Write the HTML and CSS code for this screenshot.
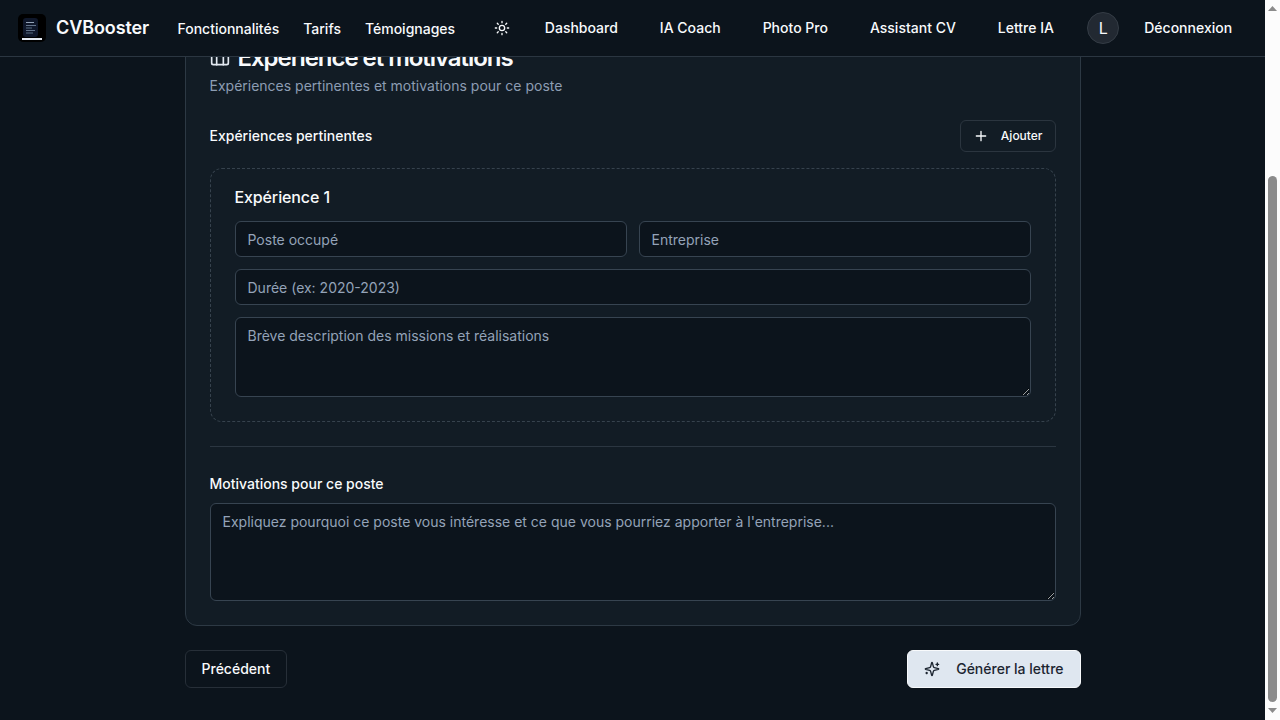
FILE: index.html
```html
<!DOCTYPE html>
<html lang="fr">
<head>
<meta charset="utf-8">
<title>CVBooster</title>
<link rel="stylesheet" href="styles.css">
</head>
<body>
<div class="page">
  <header class="header">
    <svg class="logo" width="28" height="28" viewBox="0 0 28 28"><rect width="28" height="28" rx="5" fill="#000"/><rect x="5" y="4" width="15" height="19" rx="3" fill="#0f172a"/><path d="M8 8.500h8" stroke="#94a3b8"/><path d="M8 11.500h10M8 16.500h9" stroke="#64748b"/><path d="M8 14h6M8 19h7" stroke="#334155" stroke-width="2"/><rect x="4" y="24" width="20" height="2" fill="#e2e8f0"/></svg>
    <span class="brand">CVBooster</span>
    <nav class="links"><a>Fonctionnalités</a><a>Tarifs</a><a>Témoignages</a></nav>
    <svg class="icon sun" width="16" height="16" viewBox="0 0 24 24"><circle cx="12" cy="12" r="4"/><path d="M12 2v2M12 20v2M4.930 4.930l1.410 1.410M17.660 17.660l1.410 1.410M2 12h2M20 12h2M6.340 17.660l-1.410 1.410M19.070 4.930l-1.410 1.410"/></svg>
    <nav class="app-links"><a>Dashboard</a><a>IA Coach</a><a>Photo Pro</a><a>Assistant CV</a><a>Lettre IA</a></nav>
    <span class="avatar">L</span>
    <a class="logout">Déconnexion</a>
  </header>
  <main class="main">
    <section class="card">
      <h2 class="title"><svg class="icon" width="20" height="20" viewBox="0 0 24 24"><path d="M16 20V4a2 2 0 0 0-2-2h-4a2 2 0 0 0-2 2v16"/><rect x="2" y="6" width="20" height="14" rx="2"/></svg>Expérience et motivations</h2>
      <p class="subtitle">Expériences pertinentes et motivations pour ce poste</p>
      <div class="row">
        <span class="label">Expériences pertinentes</span>
        <button class="btn small"><svg class="icon" width="16" height="16" viewBox="0 0 24 24"><path d="M5 12h14M12 5v14"/></svg>Ajouter</button>
      </div>
      <div class="experience">
        <h4 class="exp-title">Expérience 1</h4>
        <div class="fields">
          <input class="field" placeholder="Poste occupé">
          <input class="field" placeholder="Entreprise">
          <input class="field wide" placeholder="Durée (ex: 2020-2023)">
          <textarea class="field wide area" placeholder="Brève description des missions et réalisations"></textarea>
        </div>
      </div>
      <hr class="separator">
      <label class="label motivation">Motivations pour ce poste</label>
      <textarea class="field area tall" placeholder="Expliquez pourquoi ce poste vous intéresse et ce que vous pourriez apporter à l'entreprise..."></textarea>
    </section>
    <div class="actions">
      <button class="btn">Précédent</button>
      <button class="btn primary"><svg class="icon" width="16" height="16" viewBox="0 0 24 24"><path d="M9.937 15.5A2 2 0 0 0 8.5 14.063l-6.135-1.582a.5.5 0 0 1 0-.962L8.5 9.936A2 2 0 0 0 9.937 8.5l1.582-6.135a.5.5 0 0 1 .963 0L14.063 8.5A2 2 0 0 0 15.5 9.937l6.135 1.581a.5.5 0 0 1 0 .964L15.5 14.063a2 2 0 0 0-1.437 1.437l-1.582 6.135a.5.5 0 0 1-.963 0z"/><path d="M20 3v4M22 5h-4M4 17v2M5 18H3"/></svg>Générer la lettre</button>
    </div>
  </main>
</div>
<div class="scrollbar">
  <svg width="9" height="5" viewBox="0 0 9 5"><path d="M4.500 0L9 5H0z" fill="#8b8b8b"/></svg>
  <div class="thumb"></div>
  <svg width="9" height="5" viewBox="0 0 9 5"><path d="M0 0h9L4.500 5z" fill="#8b8b8b"/></svg>
</div>
</body>
</html>
```
FILE: styles.css
```css
* { box-sizing: border-box; margin: 0; }
body {
  display: flex;
  height: 720px;
  overflow: hidden;
  background: #0c141c;
  color: #f8fafc;
  font: 14px/20px Inter, sans-serif;
}
.page { width: 1265px; height: 720px; overflow: hidden; }
.icon {
  fill: none;
  stroke: currentColor;
  stroke-width: 2;
  stroke-linecap: round;
  stroke-linejoin: round;
  flex: none;
}
.header {
  height: 57px;
  display: flex;
  align-items: center;
  padding-left: 18px;
  border-bottom: 1px solid #2b3641;
  font-weight: 500;
  white-space: nowrap;
}
.brand { margin-left: 10px; width: 93px; font-size: 18px; line-height: 28px; font-weight: 600; letter-spacing: -0.1px; }
.links { display: flex; gap: 24px; margin-left: 28.5px; padding-top: 2px; }
.sun { margin-left: 39px; }
.app-links { display: flex; gap: 42px; margin-left: 34.7px; }
.avatar {
  width: 32px;
  height: 32px;
  margin-left: 33.3px;
  border: 1px solid #343c45;
  border-radius: 50%;
  background: #222932;
  text-align: center;
  font-size: 16px;
  line-height: 31px;
  font-weight: 400;
}
.logout { margin-left: 25px; }
.main { width: 896px; margin: 0 auto; height: 663px; overflow: hidden; }
.card {
  height: 594px;
  margin-top: -25px;
  padding: 9px 24px 24px;
  background: #121c25;
  border: 1px solid #2d3944;
  border-radius: 12px;
}
.title {
  display: flex;
  align-items: center;
  gap: 8px;
  height: 32px;
  font-size: 24px;
  line-height: 32px;
  font-weight: 600;
  letter-spacing: -1.04px;
}
.title .icon { color: #e2e8f0; }
.subtitle { margin-top: 2px; color: #8d9db3; }
.row { display: flex; align-items: center; justify-content: space-between; margin-top: 24px; }
.label { font-weight: 500; }
.btn {
  display: flex;
  align-items: center;
  gap: 16px;
  height: 38px;
  padding: 0 16px;
  border: 1px solid #272f38;
  border-radius: 6px;
  background: transparent;
  color: #f8fafc;
  font: 500 14px/20px Inter, sans-serif;
}
.small { height: 32px; padding: 0 12px; gap: 12px; border-color: #2b353f; font-size: 12px; }
.experience {
  height: 254px;
  margin-top: 16px;
  padding: 16px 24px;
  border: 1px dashed #36424d;
  border-radius: 12px;
}
.exp-title { font-size: 16px; line-height: 24px; font-weight: 500; letter-spacing: -0.12px; }
.fields { display: grid; grid-template-columns: 1fr 1fr; gap: 12px; margin-top: 12px; }
.field {
  display: block;
  width: 100%;
  height: 36px;
  padding: 4px 12px;
  background: #0c141c;
  border: 1px solid #374451;
  border-radius: 6px;
  color: #f8fafc;
  font: 14px/20px Inter, sans-serif;
}
.field::placeholder { color: #94a3b8; opacity: 1; }
.wide { grid-column: 1 / -1; }
.area { height: 80px; padding: 8px 12px; }
.tall { height: 98px; margin-top: 9px; }
.separator { height: 1px; margin: 24px 0 27px; border: 0; background: #2b3641; }
.motivation { display: block; }
.actions { display: flex; justify-content: space-between; margin-top: 24px; }
.primary { background: #dfe7f0; border-color: #f8fafc; color: #1c2530; }
.scrollbar {
  width: 15px;
  height: 720px;
  padding: 6px 0 7px;
  display: flex;
  flex-direction: column;
  align-items: center;
  background: #fcfcfc;
}
.thumb { width: 9px; height: 526px; margin: 165px 0 6px; border-radius: 5px; background: #8b8b8b; }
```
